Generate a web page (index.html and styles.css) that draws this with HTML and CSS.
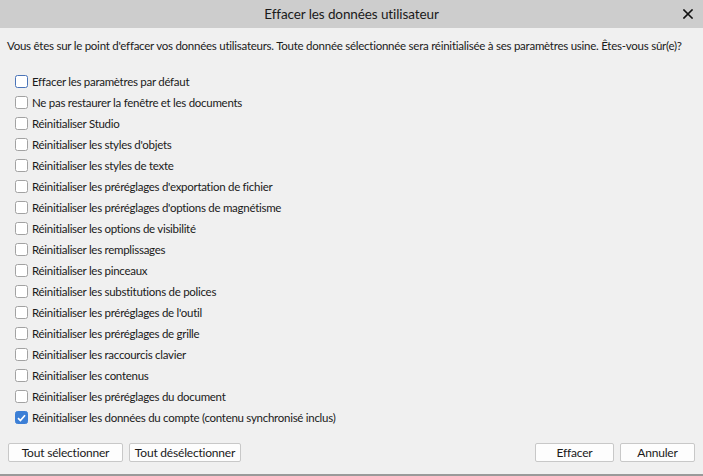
FILE: index.html
```html
<!DOCTYPE html>
<html lang="fr">
<head>
<meta charset="utf-8">
<title>Effacer les données utilisateur</title>
<link rel="stylesheet" href="styles.css">
</head>
<body>
<div class="dialog">
  <div class="titlebar">
    <span class="title">Effacer les données utilisateur</span>
    <span class="close" aria-label="Fermer">
      <svg width="10" height="10" viewBox="0 0 10 10"><path d="M1 1L9 9M9 1L1 9" stroke="#111" stroke-width="1.6" stroke-linecap="square"/></svg>
    </span>
  </div>
  <div class="content">
    <p class="intro">Vous êtes sur le point d'effacer vos données utilisateurs. Toute donnée sélectionnée sera réinitialisée à ses paramètres usine. Êtes-vous sûr(e)?</p>
    <ul class="options">
      <li><span class="box focus"></span>Effacer les paramètres par défaut</li>
      <li><span class="box"></span>Ne pas restaurer la fenêtre et les documents</li>
      <li><span class="box"></span>Réinitialiser Studio</li>
      <li><span class="box"></span>Réinitialiser les styles d'objets</li>
      <li><span class="box"></span>Réinitialiser les styles de texte</li>
      <li><span class="box"></span>Réinitialiser les préréglages d'exportation de fichier</li>
      <li><span class="box"></span>Réinitialiser les préréglages d'options de magnétisme</li>
      <li><span class="box"></span>Réinitialiser les options de visibilité</li>
      <li><span class="box"></span>Réinitialiser les remplissages</li>
      <li><span class="box"></span>Réinitialiser les pinceaux</li>
      <li><span class="box"></span>Réinitialiser les substitutions de polices</li>
      <li><span class="box"></span>Réinitialiser les préréglages de l'outil</li>
      <li><span class="box"></span>Réinitialiser les préréglages de grille</li>
      <li><span class="box"></span>Réinitialiser les raccourcis clavier</li>
      <li><span class="box"></span>Réinitialiser les contenus</li>
      <li><span class="box"></span>Réinitialiser les préréglages du document</li>
      <li><span class="box checked"><svg width="9" height="8" viewBox="0 0 9 8"><path d="M1 4.2L3.4 6.6L8 1.2" fill="none" stroke="#fff" stroke-width="1.7"/></svg></span>Réinitialiser les données du compte (contenu synchronisé inclus)</li>
    </ul>
    <div class="footer">
      <div class="group">
        <button class="btn w115">Tout sélectionner</button>
        <button class="btn w112">Tout désélectionner</button>
      </div>
      <div class="group">
        <button class="btn w79">Effacer</button>
        <button class="btn w74">Annuler</button>
      </div>
    </div>
  </div>
</div>
</body>
</html>
```

FILE: styles.css
```css
* { box-sizing: border-box; }
html, body { margin: 0; padding: 0; }
body {
  width: 703px;
  height: 476px;
  background: #f0f0f0;
  font-family: Lato, "Noto Sans", sans-serif;
  font-size: 11.5px;
  color: #1a1a1a;
  overflow: hidden;
}
.dialog {
  height: 476px;
  display: flex;
  flex-direction: column;
  border-bottom: 2px solid #9a9a9a;
}
.titlebar {
  height: 28px;
  background: #cdcdcd;
  display: flex;
  align-items: center;
  justify-content: center;
  position: relative;
}
.title { font-size: 13.5px; color: #1a1a1a; letter-spacing: -0.1px; }
.close {
  position: absolute;
  right: 10px;
  top: 9px;
  width: 10px;
  height: 10px;
  display: flex;
}
.content {
  flex: 1;
  display: flex;
  flex-direction: column;
  padding: 10px 8px 0 7px;
}
.intro {
  margin: 0;
  line-height: 16px;
  white-space: nowrap;
  letter-spacing: -0.25px;
}
.options {
  list-style: none;
  margin: 17px 0 0 8px;
  padding: 0;
}
.options li {
  height: 21px;
  display: flex;
  align-items: center;
  white-space: nowrap;
  letter-spacing: -0.28px;
}
.box {
  width: 13px;
  height: 13px;
  border: 1px solid #a2a2a2;
  border-radius: 2.5px;
  background: #fff;
  margin-right: 4px;
  display: flex;
  align-items: center;
  justify-content: center;
  flex: none;
}
.box.focus { border-color: #4a74b8; }
.box.checked { background: #3c7fd6; border-color: #3c7fd6; }
.footer {
  margin-top: 15px;
  display: flex;
  justify-content: space-between;
  padding-left: 1px;
}
.group { display: flex; gap: 6px; }
.btn {
  height: 19px;
  padding: 0;
  border: 1px solid #c8c8c8;
  border-radius: 2px;
  background: #fdfdfd;
  font-family: inherit;
  font-size: 12px;
  letter-spacing: -0.2px;
  color: #1a1a1a;
  line-height: 17px;
  white-space: nowrap;
}
.w115 { width: 115px; }
.w112 { width: 112px; }
.w79 { width: 79px; }
.w74 { width: 75px; }
```
